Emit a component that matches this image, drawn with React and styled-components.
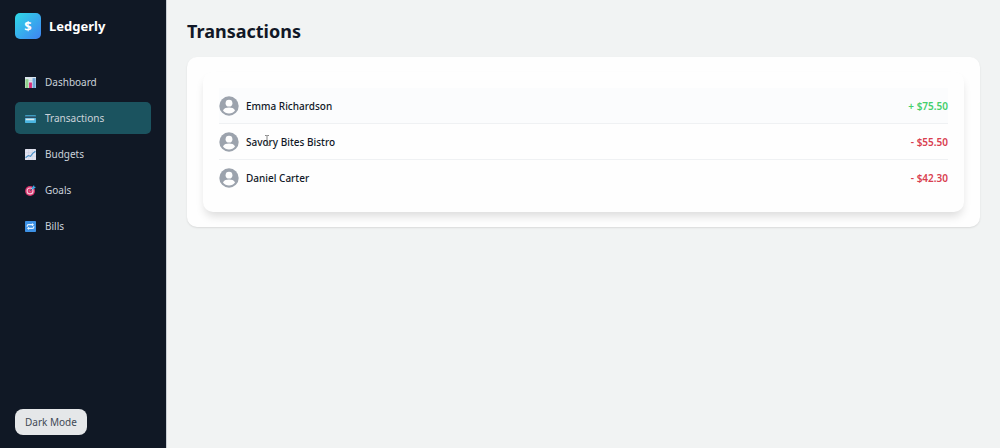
import React from "react";
import styled, { createGlobalStyle } from "styled-components";

const GlobalStyle = createGlobalStyle`
	* {
		box-sizing: border-box;
	}
	body {
		margin: 0;
		background: #f1f3f3;
		color: #111827;
		font-family: "Noto Sans", "Open Sans", sans-serif;
		font-size: 10px;
	}
`;

const Layout = styled.div`
	display: flex;
	min-height: 100vh;
`;

const Sidebar = styled.aside`
	display: flex;
	flex-direction: column;
	flex: none;
	width: 167px;
	padding: 13px 15px;
	background: #101825;
	border-right: 1px solid #c9ced3;
`;

const Brand = styled.div`
	display: flex;
	align-items: center;
	gap: 8px;
	margin-bottom: 27px;
`;

const Logo = styled.span`
	display: flex;
	align-items: center;
	justify-content: center;
	width: 26px;
	height: 26px;
	border-radius: 5px;
	background: linear-gradient(135deg, #2fd9e6, #3f83f3);
	color: #fff;
	font-size: 13px;
	font-weight: 700;
`;

const BrandName = styled.span`
	color: #fff;
	font-size: 13px;
	font-weight: 700;
`;

const Nav = styled.nav`
	display: flex;
	flex-direction: column;
	gap: 4px;
`;

const NavLink = styled.a`
	display: flex;
	align-items: center;
	gap: 9px;
	height: 32px;
	padding: 0 10px;
	border-radius: 5px;
	background: ${(props) => (props.$active ? "#1b535f" : "transparent")};
	color: #cbd2da;
	font-size: 10px;
	text-decoration: none;

	svg {
		width: 11px;
		height: 11px;
	}
`;

const ModeButton = styled.button`
	align-self: flex-start;
	height: 26px;
	margin-top: auto;
	padding: 0 10px;
	border: 0;
	border-radius: 8px;
	background: #e5e7e9;
	color: #414955;
	font-family: inherit;
	font-size: 10px;
	cursor: pointer;
`;

const Main = styled.main`
	flex: 1;
	min-width: 0;
	padding: 17px 20px;
`;

const Title = styled.h1`
	margin: 0 0 12px;
	font-size: 18px;
	line-height: 28px;
	font-weight: 700;
`;

const Panel = styled.section`
	padding: 15px 16px;
	border-radius: 10px;
	background: #fefefe;
	box-shadow: 0 1px 2px rgba(0, 0, 0, 0.1);
`;

const List = styled.ul`
	margin: 0;
	padding: 16px;
	list-style: none;
	border-radius: 10px;
	background: #fefefe;
	box-shadow: 0 6px 10px -2px rgba(0, 0, 0, 0.14);
`;

const Row = styled.li`
	display: flex;
	align-items: center;
	gap: 7px;
	height: 36px;
	border-bottom: 1px solid #eff1f3;
	background: ${(props) => (props.$hovered ? "#fbfcfd" : "transparent")};

	&:last-child {
		border-bottom: 0;
	}
`;

const Avatar = styled.svg`
	width: 20px;
	height: 20px;
	color: #9ca3ad;
`;

const Name = styled.span`
	position: relative;
	font-weight: 500;
`;

const Amount = styled.span`
	margin-left: auto;
	color: ${(props) => (props.$income ? "#45cf6c" : "#d94050")};
	font-weight: 600;
`;

const TextCursor = styled.svg`
	position: absolute;
	top: 0;
	left: 18px;
	width: 6px;
	height: 11px;
`;

const ChartIcon = () => (
	<svg viewBox="0 0 10 10" aria-hidden="true">
		<rect width="10" height="10" fill="#dce5ee" />
		<path d="M0 3.3h10M0 6.6h10" stroke="#b7c8d8" strokeWidth=".5" />
		<rect x=".4" y="2" width="2.7" height="8" fill="#8fd08a" />
		<rect x="3.7" y="5" width="2.6" height="5" fill="#d82d7a" />
		<rect x="6.900" y="1" width="2.7" height="9" fill="#6fa6d6" />
	</svg>
);

const CardIcon = () => (
	<svg viewBox="0 0 10 10" aria-hidden="true">
		<rect y="2" width="10" height="7" rx=".6" fill="#4bb5e1" />
		<rect y="3" width="10" height="1.6" fill="#294c61" />
		<rect x=".7" y="5.1" width="7.8" height="1.5" fill="#dceaf0" />
	</svg>
);

const TrendIcon = () => (
	<svg viewBox="0 0 10 10" aria-hidden="true">
		<rect width="10" height="10" rx=".5" fill="#e2e3f0" />
		<path
			d="M0 3.3h10M0 6.6h10M3.3 0v10M6.6 0v10"
			stroke="#c8cddd"
			strokeWidth=".4"
		/>
		<path
			d="M.5 8 3 6l2 .7L7 4l2.5-2"
			fill="none"
			stroke="#468fc7"
			strokeWidth="1"
		/>
	</svg>
);

const TargetIcon = () => (
	<svg viewBox="0 0 10 10" aria-hidden="true">
		<circle cx="4.6" cy="5.4" r="4.5" fill="#d9336e" />
		<circle cx="4.6" cy="5.4" r="2.7" fill="none" stroke="#f2c9d7" />
		<circle cx="4.6" cy="5.4" r="1" fill="#e45a86" />
		<path d="m4.6 5.4 3-3" stroke="#31516f" strokeWidth=".7" />
		<path d="m6.2 2.4 2-2.4.3 1.5 1.5.3-2.4 2L6.2 4z" fill="#3fa9e5" />
	</svg>
);

const RepeatIcon = () => (
	<svg viewBox="0 0 10 10" aria-hidden="true">
		<rect width="10" height="10" rx=".7" fill="#3d91e5" />
		<path
			d="M2 5.3V4.5Q2 3.3 3.2 3.3H7M8 4.7v.8q0 1.2-1.2 1.2H3"
			fill="none"
			stroke="#e8f4ff"
			strokeWidth="1"
		/>
		<path d="M6.3 1.8 8.3 3.3 6.3 4.8zM3.7 5.2 1.7 6.7l2 1.5z" fill="#e8f4ff" />
	</svg>
);

const links = [
	{ label: "Dashboard", Icon: ChartIcon },
	{ label: "Transactions", Icon: CardIcon, active: true },
	{ label: "Budgets", Icon: TrendIcon },
	{ label: "Goals", Icon: TargetIcon },
	{ label: "Bills", Icon: RepeatIcon },
];

const transactions = [
	{ name: "Emma Richardson", amount: "+ $75.50", income: true, hovered: true },
	{ name: "Savory Bites Bistro", amount: "- $55.50", pointer: true },
	{ name: "Daniel Carter", amount: "- $42.30" },
];

const App = () => {
	return (
		<>
			<GlobalStyle />
			<Layout>
				<Sidebar>
					<Brand>
						<Logo>$</Logo>
						<BrandName>Ledgerly</BrandName>
					</Brand>
					<Nav>
						{links.map(({ label, Icon, active }) => (
							<NavLink
								key={label}
								href={`#${label.toLowerCase()}`}
								$active={active}
								aria-current={active ? "page" : undefined}
							>
								<Icon />
								{label}
							</NavLink>
						))}
					</Nav>
					<ModeButton type="button">Dark Mode</ModeButton>
				</Sidebar>
				<Main>
					<Title>Transactions</Title>
					<Panel>
						<List>
							{transactions.map((item) => (
								<Row key={item.name} $hovered={item.hovered}>
									<Avatar viewBox="0 0 20 20" aria-hidden="true">
										<circle cx="10" cy="10" r="9.7" fill="currentColor" />
										<circle cx="10" cy="7.2" r="3.4" fill="#fefefe" />
										<path
											d="M4 14.5c1-2.3 3.5-2.9 6-2.9s5 .6 6 2.9c-1.3 1.9-3.5 3-6 3s-4.7-1.1-6-3z"
											fill="#fefefe"
										/>
									</Avatar>
									<Name>
										{item.name}
										{item.pointer && (
											<TextCursor viewBox="0 0 6 11" aria-hidden="true">
												<path
													d="M1 .5h1.5l.5.5.5-.5H5M3 1v9M1 10.5h1.5l.5-.5.5.5H5"
													fill="none"
													stroke="#555"
													strokeWidth=".7"
												/>
											</TextCursor>
										)}
									</Name>
									<Amount $income={item.income}>{item.amount}</Amount>
								</Row>
							))}
						</List>
					</Panel>
				</Main>
			</Layout>
		</>
	);
};

export default App;
